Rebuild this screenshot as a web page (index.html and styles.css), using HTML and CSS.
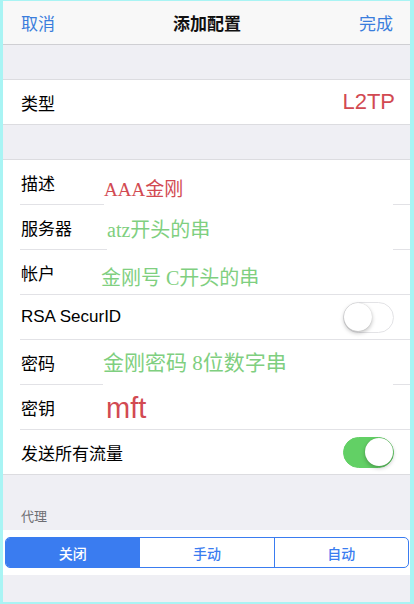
FILE: index.html
```html
<!DOCTYPE html>
<html lang="zh">
<head>
<meta charset="utf-8">
<title>添加配置</title>
<link rel="stylesheet" href="styles.css">
</head>
<body>
<div class="frame">
  <header class="nav">
    <span class="nav-btn left">取消</span>
    <span class="nav-title">添加配置</span>
    <span class="nav-btn right">完成</span>
  </header>

  <div class="gap gap-top"></div>

  <section class="group">
    <div class="row last">
      <span class="label">类型</span>
      <span class="value red">L2TP</span>
    </div>
  </section>

  <div class="gap gap-mid"></div>

  <section class="group">
    <div class="row">
      <span class="label">描述</span>
      <span class="note note-desc red serif">AAA金刚</span>
    </div>
    <div class="row">
      <span class="label">服务器</span>
      <span class="note note-server green serif">atz开头的串</span>
    </div>
    <div class="row">
      <span class="label">帐户</span>
      <span class="note note-account green serif">金刚号 C开头的串</span>
    </div>
    <div class="row">
      <span class="label">RSA SecurID</span>
      <span class="toggle"><span class="knob"></span></span>
    </div>
    <div class="row">
      <span class="label">密码</span>
      <span class="note note-pass green serif">金刚密码 8位数字串</span>
    </div>
    <div class="row">
      <span class="label">密钥</span>
      <span class="note note-key red">mft</span>
    </div>
    <div class="row last">
      <span class="label">发送所有流量</span>
      <span class="toggle on"><span class="knob"></span></span>
    </div>
  </section>

  <div class="section-header">代理</div>

  <section class="band">
    <div class="segmented">
      <span class="seg active">关闭</span>
      <span class="seg">手动</span>
      <span class="seg">自动</span>
    </div>
  </section>
</div>
</body>
</html>
```
FILE: styles.css
```css
html, body {
  margin: 0;
  padding: 0;
}
body {
  background: #a9f4f4;
  font-family: "Liberation Sans", "Noto Sans CJK SC", sans-serif;
  color: #000;
}
.frame {
  margin: 1px 4px 2px 3px;
  height: 601px;
  background: #efeff4;
  overflow: hidden;
}
.nav {
  height: 44px;
  box-sizing: border-box;
  background: #f8f8f8;
  border-bottom: 1px solid #cfcfd3;
  display: grid;
  grid-template-columns: 1fr auto 1fr;
  align-items: center;
  padding: 0 17px 0 18px;
}
.nav-btn {
  color: #3a7ddc;
  font-size: 17px;
}
.nav-btn.right { text-align: right; }
.nav-title {
  font-size: 17px;
  font-weight: bold;
  color: #111;
}
.gap-top { height: 34px; }
.gap-mid { height: 34px; }
.group {
  background: #fff;
  border-top: 1px solid #dcdce0;
  border-bottom: 1px solid #dcdce0;
}
.row {
  position: relative;
  height: 44px;
  margin-left: 17px;
  padding: 0 15px 0 1px;
  border-bottom: 1px solid #e2e2e6;
  display: flex;
  align-items: center;
}
.row.last { border-bottom: none; }
.label {
  font-size: 17px;
}
.value {
  margin-left: auto;
  font-size: 22px;
}
.red { color: #d24a52; }
.green { color: #7fcf80; }
.serif {
  font-family: "Liberation Serif", "Noto Sans CJK SC", serif;
}
.note {
  position: absolute;
  left: 84px;
  right: 17px;
  background: #fff;
  white-space: nowrap;
}
.note-desc {
  top: 18px;
  height: 28px;
  line-height: 24px;
  font-size: 19px;
}
.note-server {
  left: 87px;
  top: 12px;
  height: 34px;
  line-height: 26px;
  font-size: 20px;
}
.note-account {
  left: 81px;
  top: 16px;
  height: 24px;
  line-height: 24px;
  font-size: 20px;
}
.note-pass {
  left: 83px;
  top: 10px;
  height: 36px;
  line-height: 26px;
  font-size: 21px;
}
.note-key {
  left: 86px;
  top: 8px;
  height: 30px;
  line-height: 30px;
  font-size: 29px;
}
.toggle {
  margin-left: auto;
  margin-right: 1px;
  width: 51px;
  height: 31px;
  box-sizing: border-box;
  border-radius: 16px;
  border: 1.5px solid #e3e3e6;
  background: #fff;
  position: relative;
  display: flex;
  align-items: center;
}
.knob {
  width: 28px;
  height: 28px;
  border-radius: 50%;
  background: #fff;
  box-shadow: 0 2px 4px rgba(0,0,0,0.25), 0 0 1px rgba(0,0,0,0.2);
}
.toggle.on {
  background: #62d065;
  border-color: #62d065;
  justify-content: flex-end;
}
.section-header {
  height: 55px;
  box-sizing: border-box;
  display: flex;
  align-items: flex-end;
  padding: 0 0 4px 18px;
  font-size: 13px;
  line-height: 18px;
  color: #6d6d72;
}
.band {
  background: #fff;
  padding: 7px 1px 7px 2px;
}
.segmented {
  display: flex;
  height: 31px;
  box-sizing: border-box;
  border: 1px solid #3a7cf0;
  border-radius: 5px;
  overflow: hidden;
}
.seg {
  flex: 1;
  display: flex;
  align-items: center;
  justify-content: center;
  font-size: 14px;
  font-weight: 500;
  color: #3a7cf0;
  border-left: 1px solid #3a7cf0;
}
.seg:first-child { border-left: none; }
.seg.active {
  background: #3a7cf0;
  color: #fff;
}
```
